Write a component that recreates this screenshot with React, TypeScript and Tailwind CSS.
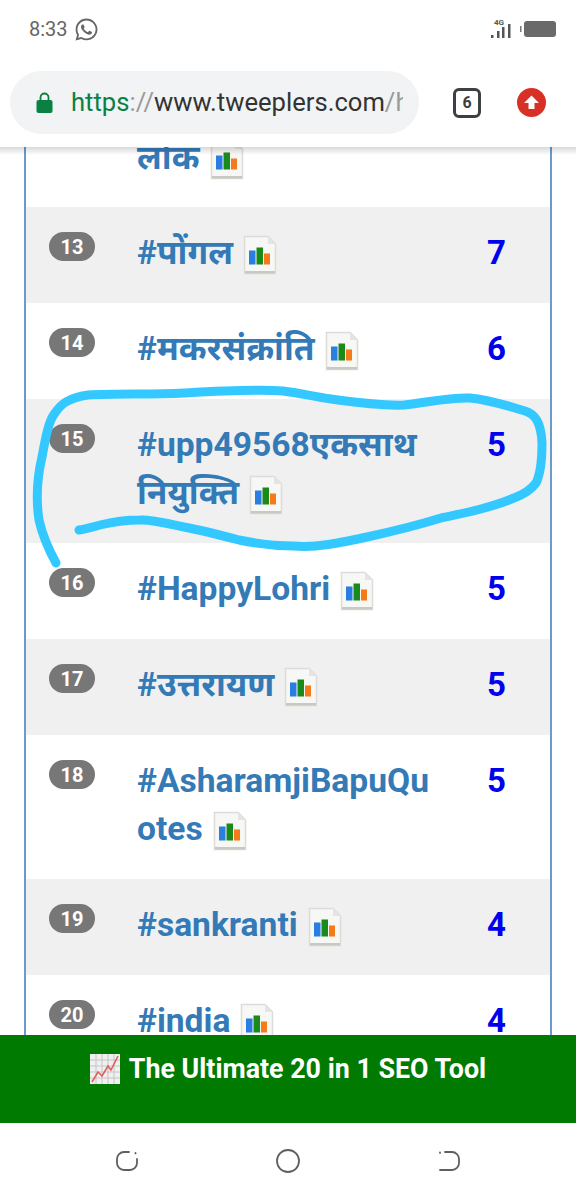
import { FaWhatsapp } from "react-icons/fa";

const ROWS = [
  { rank: 13, lines: ["#पोंगल"], count: 7 },
  { rank: 14, lines: ["#मकरसंक्रांति"], count: 6 },
  { rank: 15, lines: ["#upp49568एकसाथ", "नियुक्ति"], count: 5 },
  { rank: 16, lines: ["#HappyLohri"], count: 5 },
  { rank: 17, lines: ["#उत्तरायण"], count: 5 },
  { rank: 18, lines: ["#AsharamjiBapuQu", "otes"], count: 5 },
  { rank: 19, lines: ["#sankranti"], count: 4 },
  { rank: 20, lines: ["#india"], count: 4 },
];

function ChartIcon() {
  return (
    <svg width="34" height="40" viewBox="0 0 34 40" className="inline-block align-middle ml-[10px] mt-[4px] shrink-0">
      <path d="M1.5 1.5H25L32.5 9V38.5H1.5Z" fill="#f7f7f5" stroke="#dcdcd8" strokeWidth="1.5" />
      <path d="M25 1.5V9H32.5Z" fill="#e4e4e4" />
      <rect x="2" y="36" width="30" height="2.5" fill="#c9c9c4" />
      <rect x="6" y="15.5" width="6.5" height="14" fill="#2a7de1" />
      <rect x="13.5" y="12.5" width="6.5" height="17" fill="#1a8a1a" />
      <rect x="21" y="18.5" width="6" height="11" fill="#f57a1a" />
    </svg>
  );
}

function StatusBar() {
  return (
    <div className="h-[60px] flex items-center justify-between pl-[29px] pr-[20px] pb-[2px] text-[#666666]">
      <div className="flex items-center gap-[6px] text-[20px]">
        <span>8:33</span>
        <FaWhatsapp className="text-[25px]" />
      </div>
      <div className="flex items-center gap-[8px]">
        <svg width="22" height="22" viewBox="0 0 22 22" fill="#555555">
          <rect x="1" y="17" width="2.5" height="3" />
          <rect x="7" y="13" width="2.5" height="7" />
          <rect x="12" y="9" width="2.5" height="11" />
          <rect x="18" y="6" width="2.5" height="14" />
          <text x="4" y="7" fontSize="8" fontWeight="700" fontFamily="Roboto, sans-serif">4G</text>
        </svg>
        <svg width="36" height="20" viewBox="0 0 36 20">
          <rect x="0" y="7" width="1.5" height="6" fill="#777777" />
          <rect x="4" y="2" width="32" height="16" rx="3" fill="#6a6a6a" />
        </svg>
      </div>
    </div>
  );
}

function UrlBar() {
  return (
    <div className="h-[87px] flex items-start pt-[11px] pl-[10px] relative z-10">
      <div className="w-[409px] h-[63px] rounded-full bg-[#f1f3f4] flex items-center pl-[26px] pr-[16px]">
        <svg width="17" height="22" viewBox="0 0 17 22" className="shrink-0" fill="#0b8043">
          <path d="M4.5 8V5.5a4 4 0 0 1 8 0V8" fill="none" stroke="#0b8043" strokeWidth="1.8" />
          <rect x="0.5" y="8" width="16" height="13" rx="2" />
        </svg>
        <div className="ml-[18px] overflow-hidden whitespace-nowrap text-[25.6px] text-[#333333]">
          <span className="text-[#0b8043]">https</span>
          <span className="text-[#9a9a9a]">://</span>
          <span>www.tweeplers.com</span>
          <span className="text-[#9a9a9a]">/h</span>
        </div>
      </div>
      <div className="ml-[34px] mt-[17px] w-[28px] h-[30px] rounded-[6px] border-[3px] border-[#3c4043] flex items-center justify-center text-[16px] font-bold text-[#3c4043]">
        6
      </div>
      <div className="ml-[36px] mt-[17px] w-[29px] h-[29px] rounded-full bg-[#d93025] flex items-center justify-center">
        <svg width="17" height="17" viewBox="0 0 17 17" fill="#ffffff">
          <path d="M8.5 1.5L16 9H11.5V15H5.5V9H1Z" />
        </svg>
      </div>
    </div>
  );
}

function Badge({ rank }: { rank: number }) {
  return (
    <span className="w-[46px] h-[29px] mt-[3px] rounded-full bg-[#777777] text-white text-[20px] font-bold flex items-center justify-center shrink-0">
      {rank}
    </span>
  );
}

function Row({ rank, lines, count, striped }: { rank: number; lines: string[]; count: number; striped: boolean }) {
  return (
    <div className={`flex items-start pl-[23px] pt-[22px] pb-[26px] ${striped ? "bg-[#f0f0f0]" : "bg-white"}`}>
      <div className="w-[88px] shrink-0">
        <Badge rank={rank} />
      </div>
      <div className="w-[350px] shrink-0 text-[33.6px] leading-[48px] font-bold text-[#337ab7]">
        {lines.map((line, i) => (
          <div key={line} className="flex items-center whitespace-nowrap">
            {line}
            {i === lines.length - 1 && <ChartIcon />}
          </div>
        ))}
      </div>
      <div className="text-[33px] leading-[48px] font-bold text-[#0000ee]">{count}</div>
    </div>
  );
}

function Scribble() {
  return (
    <svg width="576" height="220" viewBox="0 380 576 220" className="absolute left-0 top-[233px] pointer-events-none" fill="none">
      <path
        d="M56 563C50 552 43 538 39 520C36 500 37 478 42 457C46 435 49 420 55 413C61 404 68 398 88 395C120 393 150 395 184 393C220 391 255 389 283 391C300 393 315 397 331 399C360 403 385 406 404 405C430 402 450 397 470 398C490 400 505 405 525 411C535 414 541 422 542 443C542 460 540 475 536 483C530 491 522 495 514 498C490 508 465 513 441 518C415 526 390 532 367 537C340 543 315 548 294 546C275 546 258 544 239 540C220 535 200 530 184 527C165 523 150 519 140 520C125 520 112 522 100 525C92 527 85 529 79 530"
        stroke="#33c8ff"
        strokeWidth="9"
        strokeLinecap="round"
        strokeLinejoin="round"
      />
    </svg>
  );
}

function Table() {
  return (
    <div className="relative flex-1 min-h-0 overflow-hidden">
      <div className="absolute inset-x-0 top-0 h-[8px] bg-gradient-to-b from-black/15 to-transparent z-10" />
      <div className="mx-[24px] w-[528px] border-x-2 border-[#6b9bc9]">
        <div className="h-[60px] overflow-hidden bg-white">
          <div className="ml-[111px] -mt-[13px] flex items-center text-[33.6px] leading-[48px] font-bold text-[#337ab7]">
            लोक
            <ChartIcon />
          </div>
        </div>
        {ROWS.map((row) => (
          <Row key={row.rank} {...row} striped={row.rank % 2 === 1} />
        ))}
      </div>
      <Scribble />
    </div>
  );
}

function PromoBar() {
  return (
    <div className="h-[88px] bg-[#007a00] flex justify-center pt-[16px] gap-[9px] text-white text-[26.8px] leading-[36px] font-bold">
      <svg width="30" height="30" viewBox="0 0 30 30" className="mt-[3px] shrink-0">
        <rect width="30" height="30" fill="#f0f0f0" />
        <path d="M0 6H30M0 12H30M0 18H30M0 24H30M6 0V30M12 0V30M18 0V30M24 0V30" stroke="#c4c4c4" strokeWidth="1" />
        <path d="M2 28L8 18L12 22L18 12L21 16L28 2" fill="none" stroke="#e35d5d" strokeWidth="1.6" />
      </svg>
      <span>The Ultimate 20 in 1 SEO Tool</span>
    </div>
  );
}

function NavBar() {
  return (
    <div className="h-[77px] bg-white flex items-center justify-center gap-[137px] pb-[1px]">
      <svg width="24" height="24" viewBox="0 0 24 24" fill="none" stroke="#5f5f5f" strokeWidth="1.8" strokeLinecap="round">
        <path d="M14 3H9a7 7 0 0 0-7 7v4a7 7 0 0 0 7 7h6a7 7 0 0 0 7-7V10" />
        <path d="M20.5 4v.4" />
      </svg>
      <svg width="24" height="24" viewBox="0 0 24 24" fill="none" stroke="#5f5f5f" strokeWidth="1.8">
        <circle cx="12" cy="12" r="11" />
      </svg>
      <svg width="24" height="24" viewBox="0 0 24 24" fill="none" stroke="#5f5f5f" strokeWidth="1.8" strokeLinecap="round">
        <path d="M8 3h7a7 7 0 0 1 7 7v4a7 7 0 0 1-7 7H3" />
        <path d="M3 3.5v.4" />
      </svg>
    </div>
  );
}

export default function App() {
  return (
    <div className="w-[576px] h-[1200px] bg-white flex flex-col overflow-hidden relative font-['Roboto','Noto_Sans','Noto_Sans_Devanagari',sans-serif]">
      <StatusBar />
      <UrlBar />
      <Table />
      <PromoBar />
      <NavBar />
    </div>
  );
}
